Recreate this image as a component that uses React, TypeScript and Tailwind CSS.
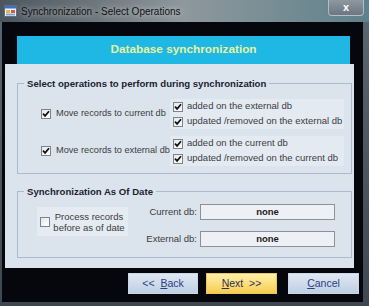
import React from "react";

function Check({ checked }: { checked: boolean }) {
  return (
    <div className="w-[10px] h-[10px] shrink-0 border border-[#7c838c] bg-gradient-to-br from-[#e4e7eb] to-white flex items-center justify-center">
      {checked && (
        <svg width="8" height="8" viewBox="0 0 8 8">
          <path d="M1 3.6 L3.1 5.9 L7 1.2" fill="none" stroke="#111" strokeWidth="1.7" />
        </svg>
      )}
    </div>
  );
}

function SubOption({ text }: { text: string }) {
  return (
    <div className="h-[15px] flex items-center gap-[4px] pl-[3px]">
      <Check checked />
      <span className="text-[9.5px] text-[#3c3c3c] whitespace-nowrap">{text}</span>
    </div>
  );
}

function MoveRow({ label, subs }: { label: string; subs: string[] }) {
  return (
    <div className="flex items-center h-[30px]">
      <div className="w-[152px] flex items-center gap-[5px] pl-[23px]">
        <Check checked />
        <span className="text-[9.2px] text-[#3c3c3c] whitespace-nowrap">{label}</span>
      </div>
      <div className="w-[174px] h-[30px] bg-[#e3eaf2] flex flex-col">
        {subs.map((s) => (
          <SubOption key={s} text={s} />
        ))}
      </div>
    </div>
  );
}

function DbField({ label }: { label: string }) {
  return (
    <div className="flex items-center h-[16px]">
      <span className="w-[69px] text-right text-[9.5px] text-[#3c3c3c]">{label}</span>
      <div className="ml-[3px] w-[135px] h-[16px] border border-[#8c9198] bg-[#edf0f4] flex items-center justify-center text-[9.5px] font-bold text-[#222]">
        none
      </div>
    </div>
  );
}

function Button({ children, yellow }: { children: React.ReactNode; yellow?: boolean }) {
  const tone = yellow
    ? "bg-gradient-to-b from-[#fff1a6] to-[#f7cc4a] border-[#e8c662] text-[#2b2f5e]"
    : "bg-gradient-to-b from-[#dfe8f3] to-[#bfcfe2] border-[#cbd7e5] text-[#2a3d86]";
  return (
    <div className={`h-[21px] border flex items-center justify-center text-[10.5px] ${tone}`}>{children}</div>
  );
}

export default function App() {
  return (
    <div
      className="w-[369px] h-[306px] overflow-hidden flex flex-col bg-gradient-to-b from-[#5d6771] to-[#3f4851]"
      style={{ fontFamily: '"Liberation Sans", Arial, sans-serif' }}
    >
      <div className="h-[22px] flex items-start bg-gradient-to-r from-[#4c555d] via-[#8e989d] to-[#5f818b]">
        <div className="flex items-center h-[22px] pl-[4px] gap-[4px]">
          <svg width="13" height="12" viewBox="0 0 13 12">
            <rect x="0.5" y="0.5" width="12" height="11" fill="#eef3f8" stroke="#5a6d8a" />
            <rect x="1" y="1" width="11" height="2.5" fill="#3f6fc4" />
            <rect x="2" y="5" width="4" height="3" fill="#f2b233" />
            <rect x="7" y="5" width="4" height="3" fill="#e05a3a" />
            <rect x="2" y="8.5" width="9" height="2" fill="#7fa6d8" />
          </svg>
          <span className="text-[10px] text-[#111] [text-shadow:0_0_6px_rgba(255,255,255,0.8)]">
            Synchronization - Select Operations
          </span>
        </div>
        <div className="ml-auto mr-[5px] w-[36px] h-[16px] rounded-b-[4px] border border-t-0 border-[#c9d2d9]/70 bg-gradient-to-b from-[#8d989f] to-[#6b7780] flex items-center justify-center text-white font-bold text-[11px] leading-none">
          x
        </div>
      </div>

      <div className="ml-[2px] w-[361px] h-[280px] bg-[#05070d] flex flex-col">
        <div className="mt-[14px] ml-[15px] w-[333px] h-[28px] bg-[#1fb8e5] flex items-center justify-center text-[11.8px] font-bold text-[#e6f29a]">
          Database synchronization
        </div>

        <div className="ml-[3px] w-[349px] h-[204px] bg-[#dbe4ed] pt-[13px] pl-[12px]">
          <fieldset className="w-[335px] h-[97px] border border-[#a9bbcd]">
            <legend className="ml-[6px] px-[3px] text-[9.6px] leading-[13px] font-bold text-[#1c2230]">
              Select operations to perform during synchronization
            </legend>
            <div className="pt-[9px] flex flex-col gap-[7px]">
              <MoveRow
                label="Move records to current db"
                subs={["added on the external db", "updated /removed on the external db"]}
              />
              <MoveRow
                label="Move records to external db"
                subs={["added on the current db", "updated /removed on the current db"]}
              />
            </div>
          </fieldset>

          <fieldset className="mt-[11px] w-[335px] h-[73px] border border-[#a9bbcd]">
            <legend className="ml-[6px] px-[3px] text-[9.6px] leading-[13px] font-bold text-[#1c2230]">
              Synchronization As Of Date
            </legend>
            <div className="flex items-start">
              <div className="mt-[9px] ml-[19px] w-[91px] h-[29px] bg-[#e4ebf2] flex items-center pl-[3px]">
                <Check checked={false} />
                <div className="flex-1 text-center text-[9.5px] leading-[11px] text-[#3c3c3c]">
                  Process records
                  <br />
                  before as of date
                </div>
              </div>
              <div className="mt-[6px] flex flex-col gap-[11px]">
                <DbField label="Current db:" />
                <DbField label="External db:" />
              </div>
            </div>
          </fieldset>
        </div>

        <div className="mt-[5px] pl-[126px] flex">
          <div className="w-[70px]">
            <Button>
              &lt;&lt;&nbsp;&nbsp;<span className="underline">B</span>ack
            </Button>
          </div>
          <div className="w-[71px] ml-[8px]">
            <Button yellow>
              <span className="underline">N</span>ext&nbsp;&nbsp;&gt;&gt;
            </Button>
          </div>
          <div className="w-[71px] ml-[11px]">
            <Button>
              <span className="underline">C</span>ancel
            </Button>
          </div>
        </div>
      </div>
    </div>
  );
}
